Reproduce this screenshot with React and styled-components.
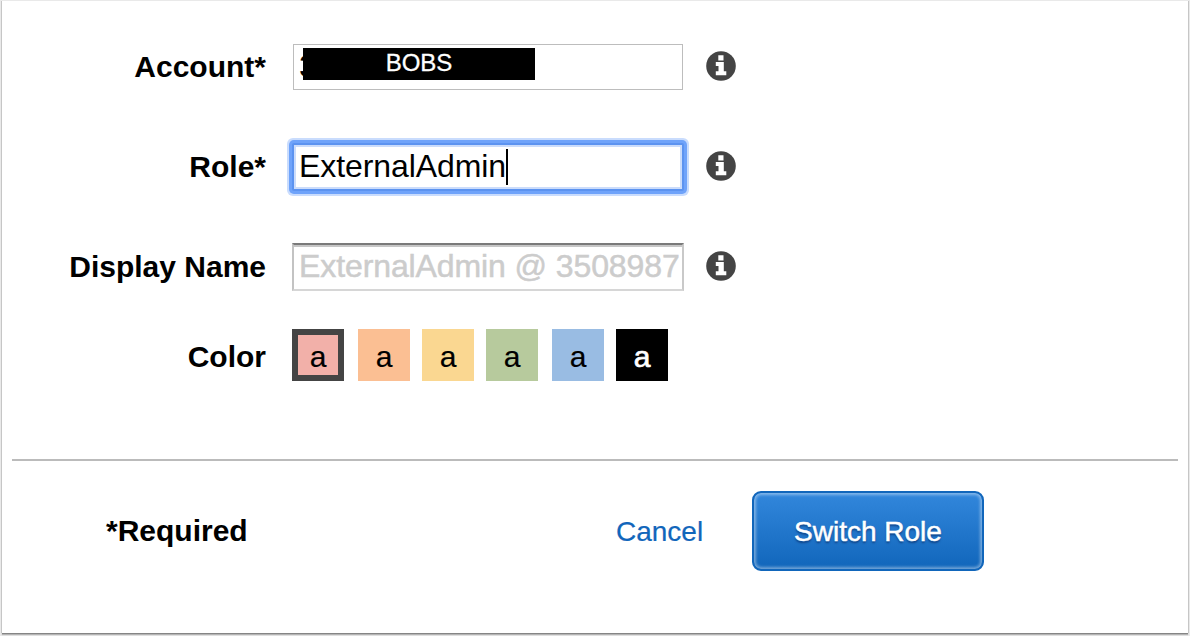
import React from "react";
import styled, { createGlobalStyle, css } from "styled-components";

const GlobalStyle = createGlobalStyle`
  * { box-sizing: border-box; }
  html, body { margin: 0; background: #ececec; }
  body {
    font-family: "Liberation Sans", Arial, Helvetica, sans-serif;
    color: #000;
    overflow: hidden;
  }
`;

const Page = styled.main`
  height: 636px;
  padding: 1px 2px 3px;
  background: #e9e9e9;
`;

const Panel = styled.form`
  height: 632px;
  padding: 32px 10px 0;
  background: #fff;
  box-shadow: -1px 0 0 0 #c6c6c6, 1px 0 0 0 #c6c6c6, 0 1px 0 0 #858585,
    0 2px 1px 0 #b4b4b4;
`;

const Row = styled.div`
  display: flex;
  align-items: center;
  height: ${(p) => p.$height}px;
`;

const Label = styled.label`
  width: 254px;
  margin-right: 26px;
  padding-top: ${(p) => p.$drop || 0}px;
  text-align: right;
  font-size: 30px;
  line-height: 34px;
  font-weight: 700;
  white-space: nowrap;
`;

const fieldStyles = {
  plain: css`
    height: 46px;
    width: 390px;
    margin: 0 1px;
    border: 1px solid #bdbdbd;
    padding: 0 5px;
  `,
  focused: css`
    height: 48px;
    width: 392px;
    border: 2px solid #5c93f0;
    padding: 0 5px;
    border-radius: 2px;
    box-shadow: inset 0 0 0 2px #cbdcfb, 0 0 0 3px #6fa3fa, 0 0 0 5px #c9dcfd;
  `,
  inset: css`
    height: 48px;
    width: 392px;
    border: 2px solid;
    border-color: #7a7a7a #c9c9c9 #d6d6d6 #c3c3c3;
    padding: 0 2px 0 5px;
    box-shadow: inset 0 2px 0 #c6c6c6;
    color: #ccc;
    -webkit-text-stroke: 0.5px #ccc;
  `,
};

const Field = styled.div`
  position: relative;
  display: flex;
  align-items: center;
  overflow: hidden;
  background: #fff;
  font-size: 32px;
  line-height: 36px;
  white-space: nowrap;
  ${(p) => fieldStyles[p.$look]}
`;

const Value = styled.span`
  padding-bottom: 2px;
  letter-spacing: ${(p) => p.$tracking || 0}px;
`;

const Caret = styled.span`
  width: 2px;
  height: 36px;
  background: #000;
`;

const Redaction = styled.span`
  position: absolute;
  left: 9px;
  top: 3px;
  width: 232px;
  height: 32px;
  background: #000;
  color: #fff;
  font-size: 24px;
  line-height: 30px;
  text-align: center;
  -webkit-text-stroke: 0.3px #fff;
`;

const InfoSvg = styled.svg`
  display: block;
  width: 30px;
  height: 30px;
  margin: 0 0 2px 22px;
`;

const Swatches = styled.div`
  display: flex;
`;

const Swatch = styled.span`
  width: 52px;
  height: 52px;
  margin-right: ${(p) => p.$gap}px;
  padding-top: 4px;
  display: flex;
  align-items: center;
  justify-content: center;
  border: ${(p) => (p.$selected ? "6px solid #444" : "0")};
  background: ${(p) => p.$color};
  color: ${(p) => (p.$light ? "#fff" : "#000")};
  font-size: 30px;
  line-height: 34px;
  -webkit-text-stroke: ${(p) => (p.$light ? "0.7px #fff" : "0.2px #000")};
`;

const Divider = styled.hr`
  height: 2px;
  margin: 50px 0 30px;
  border: 0;
  background: #bbb;
`;

const Footer = styled.footer`
  display: flex;
  align-items: center;
  height: 80px;
`;

const Required = styled.span`
  width: 510px;
  margin-left: 94px;
  font-size: 30px;
  line-height: 34px;
  font-weight: 700;
`;

const Cancel = styled.a`
  width: 136px;
  padding-top: 2px;
  font-size: 28px;
  line-height: 32px;
  color: #1166bb;
  -webkit-text-stroke: 0.2px #1166bb;
`;

const SwitchButton = styled.button`
  width: 232px;
  height: 80px;
  padding: 1px 0 0;
  border: 2px solid #1166bb;
  border-radius: 9px;
  background: linear-gradient(#3287dc, #1166bb);
  box-shadow: inset 0 0 3px 2px rgba(255, 255, 255, 0.4);
  color: #fff;
  font: 28px/32px "Liberation Sans", Arial, sans-serif;
  text-shadow: 0 2px 2px rgba(0, 20, 70, 0.5);
  -webkit-text-stroke: 0.5px #fff;
`;

function InfoIcon() {
  return (
    <InfoSvg viewBox="0 0 30 30" aria-label="Info">
      <circle cx="15" cy="15" r="14.8" fill="#444" />
      <path
        d="M12.3 4.2h5.2v5.2h-5.2zM9.8 11h8v9.2h2.5V24.2H9.8v-4h2.7v-5.2H9.8z"
        fill="#fff"
      />
    </InfoSvg>
  );
}

const colors = [
  { color: "#f2b0a9", gap: 14, selected: true },
  { color: "#fbbf93", gap: 12 },
  { color: "#fad791", gap: 12 },
  { color: "#b7ca9d", gap: 14 },
  { color: "#99bce3", gap: 12 },
  { color: "#000", gap: 0, light: true },
];

export default function App() {
  return (
    <>
      <GlobalStyle />
      <Page>
        <Panel>
          <Row $height={68}>
            <Label>Account*</Label>
            <Field $look="plain">
              <Value>3</Value>
              <Redaction>BOBS</Redaction>
            </Field>
            <InfoIcon />
          </Row>
          <Row $height={132}>
            <Label>Role*</Label>
            <Field $look="focused">
              <Value $tracking={-0.08}>ExternalAdmin</Value>
              <Caret />
            </Field>
            <InfoIcon />
          </Row>
          <Row $height={68}>
            <Label>Display Name</Label>
            <Field $look="inset">
              <Value $tracking={-0.1}>ExternalAdmin @ 3508987</Value>
            </Field>
            <InfoIcon />
          </Row>
          <Row $height={108}>
            <Label $drop={4}>Color</Label>
            <Swatches>
              {colors.map((c) => (
                <Swatch
                  key={c.color}
                  $color={c.color}
                  $gap={c.gap}
                  $selected={c.selected}
                  $light={c.light}
                >
                  a
                </Swatch>
              ))}
            </Swatches>
          </Row>
          <Divider />
          <Footer>
            <Required>*Required</Required>
            <Cancel>Cancel</Cancel>
            <SwitchButton type="button">Switch Role</SwitchButton>
          </Footer>
        </Panel>
      </Page>
    </>
  );
}
